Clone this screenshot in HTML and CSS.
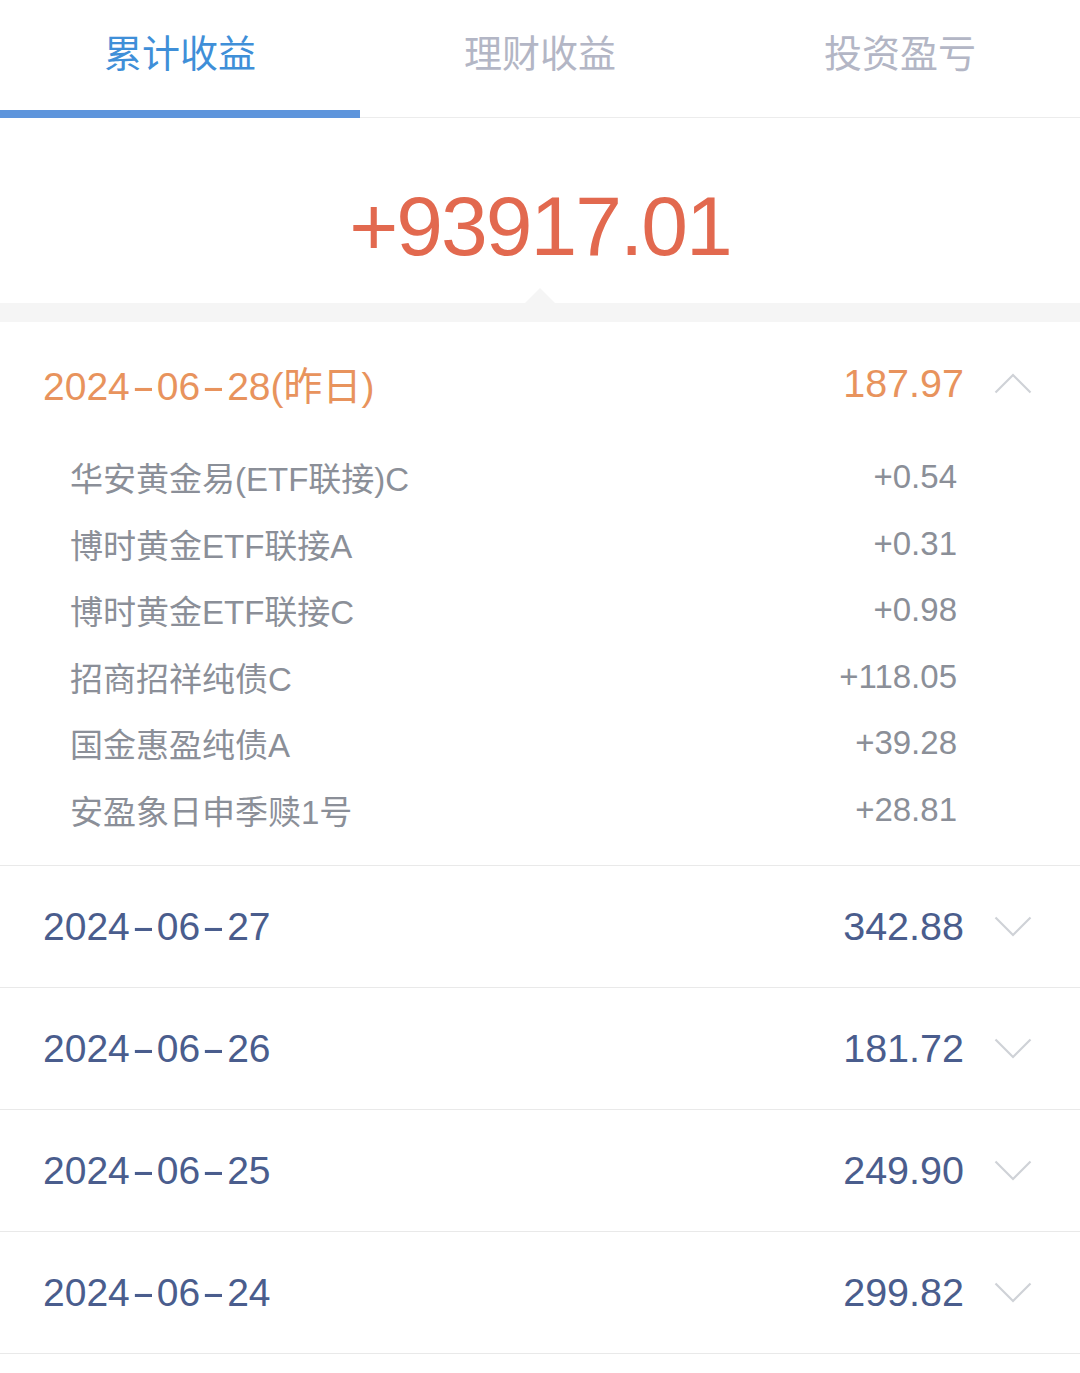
FILE: index.html
```html
<!DOCTYPE html>
<html lang="zh-CN">
<head>
<meta charset="utf-8">
<title>累计收益</title>
<link rel="stylesheet" href="styles.css">
</head>
<body>
<div class="page">
  <div class="tabs">
    <div class="tab active">累计收益</div>
    <div class="tab">理财收益</div>
    <div class="tab">投资盈亏</div>
  </div>
  <div class="summary">
    <div class="total">+93917.01</div>
  </div>
  <div class="band"></div>

  <div class="group open">
    <div class="row">
      <div class="date">2024<span class="dash">-</span>06<span class="dash">-</span>28(昨日)</div>
      <div class="amount">187.97</div>
      <svg class="chev" viewBox="0 0 38 22" width="38" height="22"><polyline points="1.5,20.5 19,3 36.5,20.5" fill="none" stroke="#cfd2d7" stroke-width="2.2"/></svg>
    </div>
    <div class="items">
      <div class="item"><span class="name">华安黄金易(ETF联接)C</span><span class="val">+0.54</span></div>
      <div class="item"><span class="name">博时黄金ETF联接A</span><span class="val">+0.31</span></div>
      <div class="item"><span class="name">博时黄金ETF联接C</span><span class="val">+0.98</span></div>
      <div class="item"><span class="name">招商招祥纯债C</span><span class="val">+118.05</span></div>
      <div class="item"><span class="name">国金惠盈纯债A</span><span class="val">+39.28</span></div>
      <div class="item"><span class="name">安盈象日申季赎1号</span><span class="val">+28.81</span></div>
    </div>
  </div>

  <div class="group">
    <div class="row">
      <div class="date">2024<span class="dash">-</span>06<span class="dash">-</span>27</div>
      <div class="amount">342.88</div>
      <svg class="chev" viewBox="0 0 38 22" width="38" height="22"><polyline points="1.5,1.5 19,19 36.5,1.5" fill="none" stroke="#cfd2d7" stroke-width="2.2"/></svg>
    </div>
  </div>
  <div class="group">
    <div class="row">
      <div class="date">2024<span class="dash">-</span>06<span class="dash">-</span>26</div>
      <div class="amount">181.72</div>
      <svg class="chev" viewBox="0 0 38 22" width="38" height="22"><polyline points="1.5,1.5 19,19 36.5,1.5" fill="none" stroke="#cfd2d7" stroke-width="2.2"/></svg>
    </div>
  </div>
  <div class="group">
    <div class="row">
      <div class="date">2024<span class="dash">-</span>06<span class="dash">-</span>25</div>
      <div class="amount">249.90</div>
      <svg class="chev" viewBox="0 0 38 22" width="38" height="22"><polyline points="1.5,1.5 19,19 36.5,1.5" fill="none" stroke="#cfd2d7" stroke-width="2.2"/></svg>
    </div>
  </div>
  <div class="group">
    <div class="row">
      <div class="date">2024<span class="dash">-</span>06<span class="dash">-</span>24</div>
      <div class="amount">299.82</div>
      <svg class="chev" viewBox="0 0 38 22" width="38" height="22"><polyline points="1.5,1.5 19,19 36.5,1.5" fill="none" stroke="#cfd2d7" stroke-width="2.2"/></svg>
    </div>
  </div>
</div>
</body>
</html>
```

FILE: styles.css
```css
* { box-sizing: border-box; }
html, body {
  margin: 0;
  padding: 0;
  background: #ffffff;
}
body {
  font-family: "Liberation Sans", "Noto Sans CJK SC", sans-serif;
  width: 1080px;
}
.page {
  width: 1080px;
  background: #fff;
}
.tabs {
  display: flex;
  height: 118px;
  border-bottom: 1px solid #ececec;
}
.tab {
  flex: 1;
  display: flex;
  align-items: center;
  justify-content: center;
  padding-bottom: 10px;
  font-size: 38px;
  color: #b3b6c5;
  border-bottom: 8px solid transparent;
  margin-bottom: -1px;
}
.tab.active {
  color: #3f8fd8;
  border-bottom-color: #5e95dc;
}
.summary {
  height: 185px;
  display: flex;
  justify-content: center;
  padding-top: 63px;
}
.total {
  font-size: 84px;
  line-height: 90px;
  letter-spacing: -2px;
  color: #e2694f;
}
.band {
  position: relative;
  height: 19px;
  background: #f5f5f5;
}
.band::before {
  content: "";
  position: absolute;
  left: 525px;
  top: -15px;
  width: 0;
  height: 0;
  border-left: 15px solid transparent;
  border-right: 15px solid transparent;
  border-bottom: 15px solid #f5f5f5;
}
.group {
  border-bottom: 1px solid #e9e9e9;
}
.row {
  display: flex;
  align-items: center;
  height: 121px;
  padding: 0 48px 0 43px;
}
.date {
  flex: 1;
  font-size: 39px;
  color: #4a5d8d;
}
.dash {
  display: inline-block;
  margin: 0 7px;
  transform: scaleX(1.8);
}
.amount {
  font-size: 39.5px;
  color: #4a5d8d;
}
.chev {
  margin-left: 30px;
  display: block;
}
.open .row {
  height: 122px;
}
.open .date,
.open .amount {
  color: #e8935d;
}
.items {
  padding: 0 123px 22px 70px;
}
.item {
  display: flex;
  justify-content: space-between;
  align-items: center;
  height: 66.5px;
  font-size: 33px;
  color: #8b8f98;
}
```
